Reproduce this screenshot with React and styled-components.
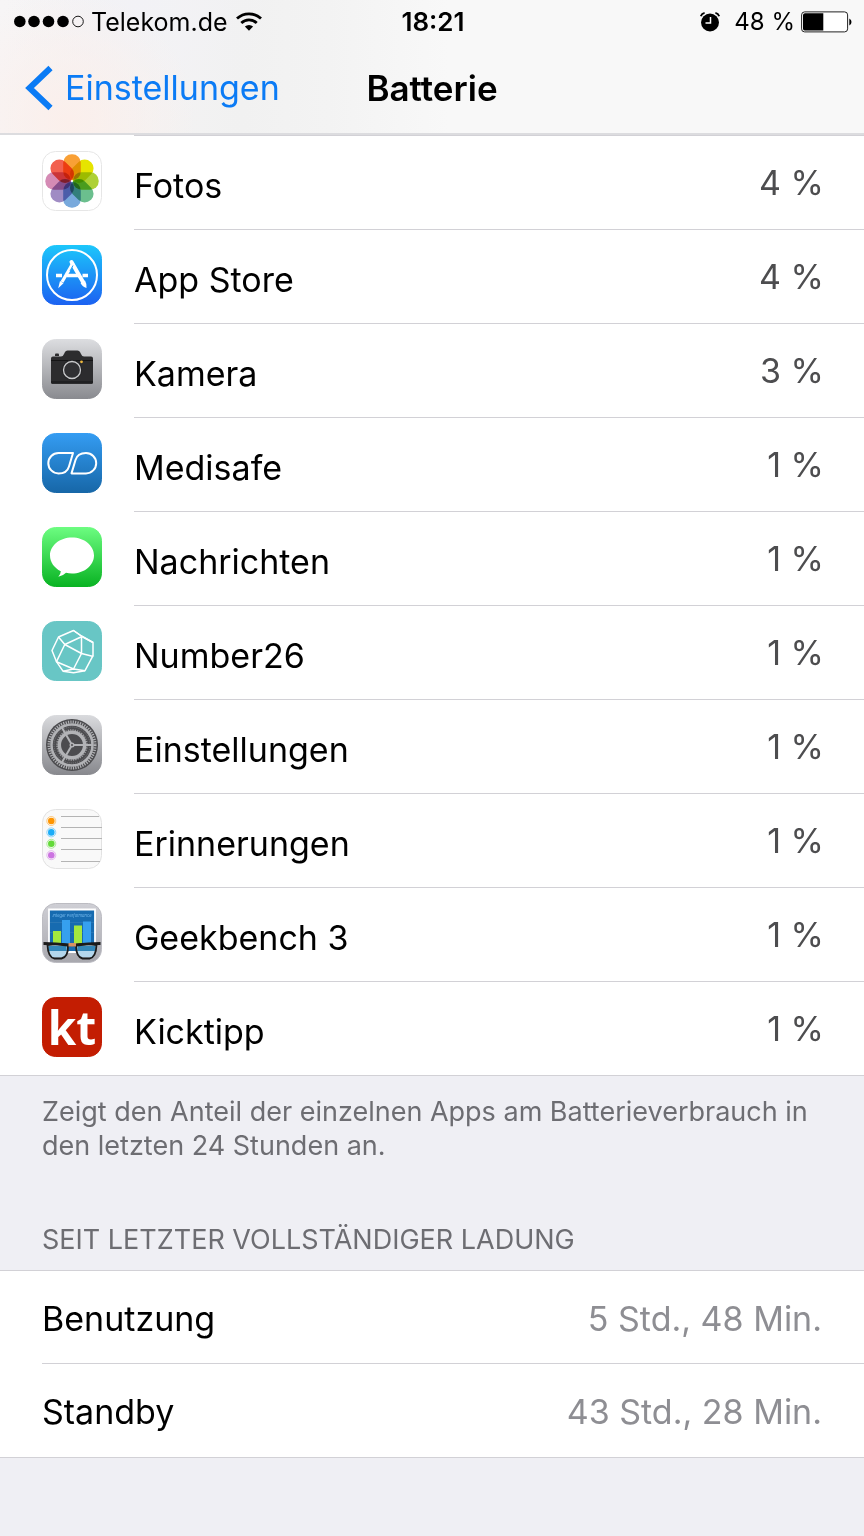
import styled, { createGlobalStyle } from "styled-components";

const Palette = {
  Font: `Inter, "Liberation Sans", sans-serif`,
  Blue: "#0b7bf5",
  Line: "#d2d1d6",
  Background: "#efeff4",
  Muted: "#6d6d72",
  Detail: "#8e8e93",
};

const GlobalStyle = createGlobalStyle`
  * {
    box-sizing: border-box;
  }
  body {
    margin: 0;
    background-color: ${Palette.Background};
    font-family: ${Palette.Font};
    color: #000;
  }
`;

const Header = styled.header`
  background-color: #f8f8f8;
  background-image: radial-gradient(circle at 8% 90%, #fbefeb 0%, rgba(251, 239, 235, 0) 16%),
    radial-gradient(circle at 16% 0%, #f2f2f6 0%, rgba(242, 242, 246, 0) 18%),
    linear-gradient(90deg, #f7f5f6 0%, #f1f1f1 28%, #f3f3f3 38%, #f8f8f8 52%);
  border-bottom: 2px solid #dcdcdf;
`;

const StatusBar = styled.div`
  display: grid;
  grid-template-columns: 1fr auto 1fr;
  align-items: center;
  height: 44px;
  padding: 0 12px 0 14px;
  line-height: 44px;
`;

const StatusGroup = styled.div`
  display: flex;
  align-items: center;
  justify-content: ${(props) => (props.$end ? "flex-end" : "flex-start")};
  gap: ${(props) => (props.$end ? "6px" : "7px")};
  font-size: ${(props) => (props.$end ? "24px" : "25px")};
`;

const Clock = styled.time`
  font-size: 26px;
  font-weight: 600;
`;

const AlarmSlot = styled.span`
  display: flex;
  margin-right: 8px;
`;

const NavBar = styled.nav`
  display: grid;
  grid-template-columns: 1fr auto 1fr;
  align-items: center;
  height: 89px;
  padding: 0 24px 2px;
`;

const BackLink = styled.a`
  display: flex;
  align-items: center;
  gap: 11px;
  color: ${Palette.Blue};
  font-size: 34px;
  text-decoration: none;
`;

const Title = styled.h1`
  margin: 0;
  font-size: 35px;
  font-weight: 600;
`;

const List = styled.ul`
  margin: 0;
  padding: 0;
  list-style: none;
  background-color: #fff;
  border-top: ${(props) => (props.$topLine ? `1px solid ${Palette.Line}` : "none")};
  border-bottom: 1px solid ${Palette.Line};
`;

const AppItem = styled.li`
  display: flex;
  align-items: center;
  padding-left: 42px;
`;

const IconBox = styled.span`
  display: flex;
  flex: none;
  width: 92px;
  padding-bottom: 2px;
`;

const RowContent = styled.div`
  display: flex;
  flex: 1;
  align-items: center;
  justify-content: space-between;
  height: 94px;
  padding-right: 40px;
  border-top: 1px solid ${Palette.Line};
`;

const Label = styled.span`
  padding-top: 5px;
  font-size: 34px;
`;

const Percent = styled.span`
  font-size: 34px;
  color: #4d4d4f;
`;

const Note = styled.p`
  margin: 0;
  padding: 19px 42px 0;
  font-size: 27px;
  line-height: 34px;
  color: ${Palette.Muted};
`;

const SectionTitle = styled.h2`
  margin: 0;
  padding: 60px 42px 13px;
  font-size: 27px;
  font-weight: 400;
  line-height: 34px;
  color: ${Palette.Muted};
`;

const DetailItem = styled.li`
  padding-left: 42px;
`;

const DetailContent = styled(RowContent)`
  padding-right: 42px;
  padding-bottom: 3px;

  ${(props) =>
    props.$first &&
    `
  height: 92px;
  border-top: none;
  `}
`;

const Detail = styled.span`
  padding-top: 5px;
  font-size: 34px;
  color: ${Palette.Detail};
`;

function SignalIcon() {
  return (
    <svg width="70" height="14" viewBox="0 0 70 14" role="img" aria-label="Signal">
      {[5.8, 20, 34.5, 49].map((x) => (
        <circle key={x} cx={x} cy="6.5" r="5.8" />
      ))}
      <circle cx="64" cy="6.5" r="5.3" fill="none" stroke="#000" strokeWidth="0.9" />
    </svg>
  );
}

function WifiIcon() {
  return (
    <svg width="28" height="20" viewBox="0 0 28 20" role="img" aria-label="WLAN">
      <g fill="none" stroke="#000" strokeWidth="2.8">
        <path d="M2 6.600a17.500 17.500 0 0 1 24 0" />
        <path d="M6.300 11a11 11 0 0 1 15.400 0" />
      </g>
      <path d="M14 18.800 9.900 14.600a5.800 5.800 0 0 1 8.200 0z" />
    </svg>
  );
}

function AlarmIcon() {
  return (
    <svg width="20" height="20" viewBox="0 0 20 20" role="img" aria-label="Wecker">
      <circle cx="10" cy="10.5" r="9" />
      <path d="M.8 4.200Q1.700 1.500 4.600.9M15.400.9Q18.300 1.500 19.200 4.200" fill="none" stroke="#000" strokeWidth="1.800" />
      <path d="M10.500 5v6H5.500" fill="none" stroke="#fff" strokeWidth="1.500" />
    </svg>
  );
}

function BatteryIcon() {
  return (
    <svg width="51" height="22" viewBox="0 0 51 22" role="img" aria-label="Batterie">
      <rect x="0.600" y="0.900" width="46" height="20" rx="3" fill="#fff" stroke="#222" />
      <path d="M2 4a2 2 0 0 1 2-1.800h18.300v17.400H4A2 2 0 0 1 2 18z" />
      <path d="M48.300 7.500q2.200 1 2.200 3.500t-2.200 3.500z" />
    </svg>
  );
}

function BackIcon() {
  return (
    <svg width="30" height="46" viewBox="0 0 30 46" aria-hidden="true">
      <path d="M26.500 3 5.500 23l21 20" fill="none" stroke={Palette.Blue} strokeWidth="6" />
    </svg>
  );
}

const Tile = ({ fill, stroke = fill, children }) => (
  <svg width="60" height="60" viewBox="0 0 60 60" aria-hidden="true">
    <rect x="0.5" y="0.5" width="59" height="59" rx="13" fill={fill} stroke={stroke} />
    {children}
  </svg>
);

const Gradient = ({ id, from, to }) => (
  <defs>
    <linearGradient id={id} x1="0" y1="0" x2="0" y2="1">
      <stop offset="0" stopColor={from} />
      <stop offset="1" stopColor={to} />
    </linearGradient>
  </defs>
);

const PetalGroup = styled.g`
  isolation: isolate;
`;

const Petal = styled.rect`
  mix-blend-mode: multiply;
`;

const petals = ["#f9a035", "#e6e400", "#aed136", "#6bbf8e", "#78a9dc", "#a08cc4", "#d58bb5", "#f2604f"];

function PhotosIcon() {
  return (
    <Tile fill="#fff" stroke="#e6e6e6">
      <PetalGroup>
        {petals.map((color, i) => (
          <Petal
            key={color}
            x="21.200"
            y="3.300"
            width="17.600"
            height="25.700"
            rx="8.500"
            fill={color}
            transform={`rotate(${i * 45} 30 30)`}
          />
        ))}
      </PetalGroup>
    </Tile>
  );
}

function AppStoreIcon() {
  return (
    <Tile fill="url(#store)">
      <Gradient id="store" from="#1cc6fb" to="#1c62f1" />
      <circle cx="30" cy="30" r="25" fill="none" stroke="#fff" strokeWidth="2" />
      <g stroke="#fff" fill="none">
        <path d="M14 30.500h6M24.500 30.500h12.500M40.500 30.500h5.500" strokeWidth="3.500" />
        <path d="M31 18 20 37" strokeWidth="3.200" />
        <path d="M29.500 17 41 37" strokeWidth="4" strokeLinecap="round" />
        <path d="m31 20.500-3 5.500" stroke="#209bf5" strokeWidth="1" />
      </g>
      <path d="m18 36 3.500 2.300-5.300 5zM38.500 38l4.500-2.500q2.200 4 1.500 7.500-4-1-6-5z" fill="#fff" />
    </Tile>
  );
}

function CameraIcon() {
  return (
    <Tile fill="url(#camera)">
      <Gradient id="camera" from="#dcdde0" to="#8a8b90" />
      <path d="M9 19.500q0-2 2-2h8q2 0 3-2.500l1-2q.700-1.500 2.500-1.500h10q1.800 0 2.500 1.500l1 2q1 2.500 3 2.500h7q2 0 2 2v24q0 1.500-1.500 1.500h-39Q9 45 9 43.500z" fill="#2c2c2e" />
      <path d="M13 17v-1.500q0-1 1-1h2q1 0 1 1V17z" fill="#2c2c2e" />
      <path d="M9 21.500h42M9 43h42" stroke="#151516" />
      <circle cx="30" cy="31" r="10.200" fill="#242426" />
      <circle cx="30" cy="31" r="8.500" fill="#303033" stroke="#c9cacc" strokeWidth="1.300" />
      <circle cx="39.500" cy="22.800" r="1.400" fill="#edb83e" />
    </Tile>
  );
}

function MedisafeIcon() {
  return (
    <Tile fill="url(#medisafe)">
      <Gradient id="medisafe" from="#349cf2" to="#1767a8" />
      <g fill="none" stroke="#fff" strokeWidth="2" strokeLinejoin="round">
        <path d="M31 20H16.500a10.200 10.200 0 0 0 0 20.400q8.500 0 10.500-7z" />
        <path d="M29.500 40.400h14.500a10.200 10.200 0 0 0 0-20.400q-8.500 0-10.500 7z" />
      </g>
    </Tile>
  );
}

function MessagesIcon() {
  return (
    <Tile fill="url(#messages)">
      <Gradient id="messages" from="#6cfc80" to="#09b323" />
      <path d="M30 10.500c12.200 0 22 8 22 18s-9.800 18-22 18q-3.300 0-6-.700-3.300 3.400-7.700 3.900 2.300-2.200 2.500-5.500C12.300 41 8 35.200 8 28.500c0-10 9.800-18 22-18z" fill="#fff" />
    </Tile>
  );
}

function NumberIcon() {
  return (
    <Tile fill="#68c6c5">
      <g fill="none" stroke="#fff" strokeWidth="1.500" strokeLinejoin="round">
        <path d="M31.500 9.500 16.500 16 10 29.500l4.500 11.200 6.500 9.500 10.500 1.500 11.500-2 8-15V21.500L39.500 15z" />
        <path d="m16.500 16 6.300 7.500L40 15.500 31.500 9.500M39.500 15v17.500L51.300 35.500M22.800 23.500l16.700 9-8 15.500-17-7.300zL14.500 40.700" />
        <path d="m31.500 48 11.500 1.700M31.500 48 21 50.200M40 15.500l11 6" />
      </g>
    </Tile>
  );
}

function SettingsIcon() {
  return (
    <Tile fill="url(#settings)">
      <Gradient id="settings" from="#d9dadd" to="#88898e" />
      <circle cx="30" cy="30" r="26" fill="#4c4c4f" />
      <circle cx="30" cy="30" r="23" fill="none" stroke="#b2b3b6" strokeWidth="3" strokeDasharray="1.200 1.209" />
      <circle cx="30" cy="30" r="20.500" fill="none" stroke="#b2b3b6" strokeWidth="2.500" />
      <circle cx="30" cy="30" r="18" fill="none" stroke="#77787b" strokeWidth="1" strokeDasharray="1 1" />
      <circle cx="30" cy="30" r="12.700" fill="none" stroke="#b2b3b6" strokeWidth="3.500" />
      <circle cx="30" cy="30" r="15" fill="none" stroke="#a4a5a8" strokeWidth="1.500" strokeDasharray="1.200 1.156" />
      {[0, 120, 240].map((angle) => (
        <path key={angle} d="M30 30h20" stroke="#b2b3b6" strokeWidth="2" transform={`rotate(${angle} 30 30)`} />
      ))}
      <circle cx="30" cy="30" r="2.500" fill="#b2b3b6" />
      <circle cx="30" cy="30" r="1" fill="#48484b" />
    </Tile>
  );
}

const reminderDots = ["#ff9500", "#1badf8", "#63da38", "#cc73e1"];

function RemindersIcon() {
  return (
    <Tile fill="#f9f9f9" stroke="#e2e2e2">
      {reminderDots.map((color, i) => (
        <g key={color}>
          <circle cx="9.300" cy={12 + i * 11.400} r="4.500" fill="none" stroke={color} strokeOpacity="0.6" strokeWidth="0.800" />
          <circle cx="9.300" cy={12 + i * 11.400} r="3.300" fill={color} />
        </g>
      ))}
      <path d="M19 7.500h38M19 18.500h41M19 29.500h41M19 40.500h41M19 52.500h39" stroke="#b4b4b4" />
    </Tile>
  );
}

const ChartCaption = styled.text`
  font-family: ${Palette.Font};
  font-size: 4px;
  font-style: italic;
  fill: #78bdf0;
`;

function GeekbenchIcon() {
  return (
    <Tile fill="url(#geek)" stroke="#bcbcc2">
      <Gradient id="geek" from="#cfcfd5" to="#a8a8ae" />
      <path d="M7 6.500h46V49H7z" fill="#176bb0" stroke="#fff" strokeWidth="1.800" />
      <path d="M8 19.500h44M8 29.500h44" stroke="#367eb7" strokeWidth="0.600" />
      <ChartCaption x="30" y="14" textAnchor="middle">
        Integer Performance
      </ChartCaption>
      <path d="M20 17h8v24h-8zM41 18.500h8V41h-8z" fill="#36a0ef" />
      <path d="M11 28h8v13h-8zM32 22.500h8V41h-8z" fill="#a4e83f" />
      <path d="M5.500 42h20l-2 12.500h-15zM34.500 42h20l-3 12.500H37z" fill="#b4d7ec" />
      <path d="M6.500 43h18v5h-18zM35.500 43h18v5h-18z" fill="#3387b8" />
      <g fill="none" stroke="#1b1b1b" strokeLinejoin="round">
        <path d="M5.500 42q10-2 20.500 0 .500 12-6.500 13.500h-7Q6 54.500 5.500 42zM34 42q10.500-2 20.500 0-.5 12.500-7 13.500h-7Q34 54 34 42z" strokeWidth="1.800" />
        <path d="M1.500 40.500q12 0 24.500 1.500 4-1 8 0 12.500-1.500 24.500-1.500" strokeWidth="3.200" />
      </g>
      <path d="M26.500 40h7.500v3.500h-7.500z" fill="#d69263" />
    </Tile>
  );
}

const LogoText = styled.text`
  font-family: "Noto Sans", "Open Sans", sans-serif;
  font-size: 46px;
  font-weight: 700;
  fill: #fff;
`;

function KicktippIcon() {
  return (
    <Tile fill="#c31d02">
      <LogoText x="30" y="48" textAnchor="middle">
        kt
      </LogoText>
    </Tile>
  );
}

const apps = [
  { name: "Fotos", percent: "4 %", Icon: PhotosIcon },
  { name: "App Store", percent: "4 %", Icon: AppStoreIcon },
  { name: "Kamera", percent: "3 %", Icon: CameraIcon },
  { name: "Medisafe", percent: "1 %", Icon: MedisafeIcon },
  { name: "Nachrichten", percent: "1 %", Icon: MessagesIcon },
  { name: "Number26", percent: "1 %", Icon: NumberIcon },
  { name: "Einstellungen", percent: "1 %", Icon: SettingsIcon },
  { name: "Erinnerungen", percent: "1 %", Icon: RemindersIcon },
  { name: "Geekbench 3", percent: "1 %", Icon: GeekbenchIcon },
  { name: "Kicktipp", percent: "1 %", Icon: KicktippIcon },
];

const usage = [
  { label: "Benutzung", value: "5 Std., 48 Min." },
  { label: "Standby", value: "43 Std., 28 Min." },
];

function App() {
  return (
    <>
      <GlobalStyle />
      <Header>
        <StatusBar>
          <StatusGroup>
            <SignalIcon />
            <span>Telekom.de</span>
            <WifiIcon />
          </StatusGroup>
          <Clock>18:21</Clock>
          <StatusGroup $end>
            <AlarmSlot>
              <AlarmIcon />
            </AlarmSlot>
            <span>48 %</span>
            <BatteryIcon />
          </StatusGroup>
        </StatusBar>
        <NavBar>
          <BackLink href="#einstellungen">
            <BackIcon />
            Einstellungen
          </BackLink>
          <Title>Batterie</Title>
        </NavBar>
      </Header>
      <main>
        <List>
          {apps.map(({ name, percent, Icon }) => (
            <AppItem key={name}>
              <IconBox>
                <Icon />
              </IconBox>
              <RowContent>
                <Label>{name}</Label>
                <Percent>{percent}</Percent>
              </RowContent>
            </AppItem>
          ))}
        </List>
        <Note>Zeigt den Anteil der einzelnen Apps am Batterieverbrauch in den letzten 24 Stunden an.</Note>
        <SectionTitle>SEIT LETZTER VOLLSTÄNDIGER LADUNG</SectionTitle>
        <List $topLine>
          {usage.map(({ label, value }, i) => (
            <DetailItem key={label}>
              <DetailContent $first={i === 0}>
                <Label>{label}</Label>
                <Detail>{value}</Detail>
              </DetailContent>
            </DetailItem>
          ))}
        </List>
      </main>
    </>
  );
}

export default App;
